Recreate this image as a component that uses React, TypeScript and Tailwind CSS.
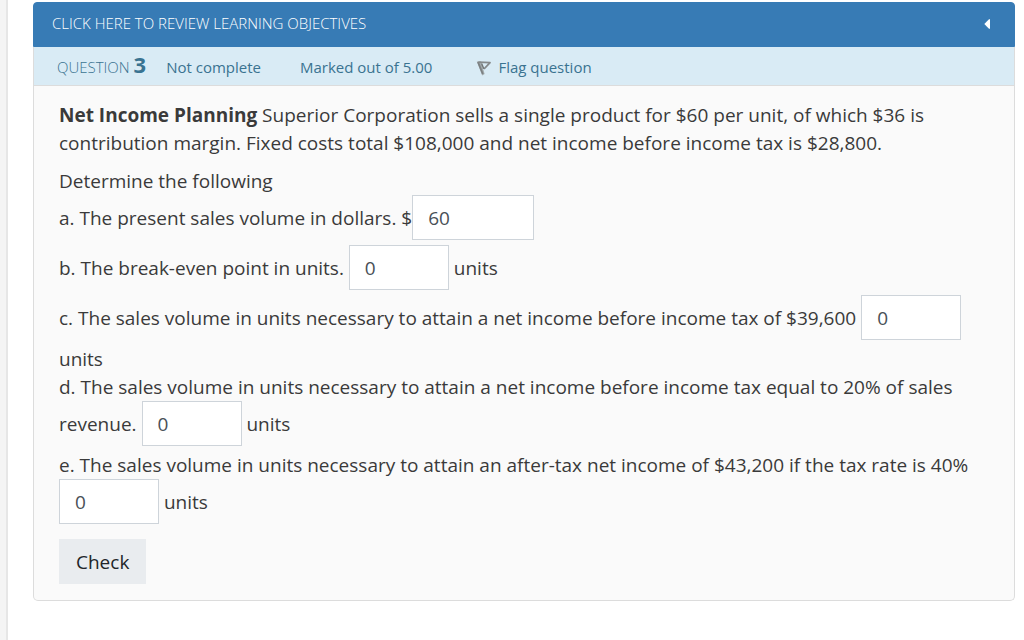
import { useState } from "react";

type AnswerProps = { label: string; initial: string; wide?: boolean };

function Answer({ label, initial, wide }: AnswerProps) {
  const [value, setValue] = useState(initial);
  return (
    <input
      type="text"
      aria-label={label}
      value={value}
      onChange={(e) => setValue(e.target.value)}
      className={`mb-[5px] h-[45px] border border-[#ced4da] bg-white px-[15px] text-[#495057] outline-none focus:border-[#80bdff] ${
        wide ? "w-[122px]" : "w-[100px]"
      }`}
    />
  );
}

function FlagIcon() {
  return (
    <svg viewBox="0 0 16 18" className="h-[18px] w-4 self-center" fill="none" aria-hidden="true">
      <path d="M.8 3.4 L5 3.4 L8.6 16 L6.2 17.4 Z" fill="#a3abae" />
      <path d="M2 4 L6.8 16" stroke="#7d8183" strokeWidth="1.8" />
      <path d="M2.4 4.2 L14 4.6 L8 11" stroke="#85898b" strokeWidth="1.8" strokeLinejoin="round" />
      <path d="M5.6 5.4 L7.8 10.8" stroke="#6f7374" strokeWidth="1.4" />
    </svg>
  );
}

export default function App() {
  return (
    <div className="flex min-h-screen bg-white font-['Open_Sans',sans-serif]">
      <aside className="w-2 shrink-0 border-r-2 border-[#e6e6e6] bg-[#f4f4f4]" />
      <main className="min-w-0 flex-1 pt-[2px] pr-[9px] pb-10 pl-[25px]">
        <button
          type="button"
          className="flex h-[45px] w-full items-center justify-between rounded-t border border-[#377bb5] bg-[#377bb5] pr-6 pl-[18px] text-[15px] font-light text-white"
        >
          <span className="pb-[2px]">CLICK HERE TO REVIEW LEARNING OBJECTIVES</span>
          <svg viewBox="0 0 6 10" className="mb-[2px] h-[10px] w-[6px]" fill="currentColor" aria-hidden="true">
            <path d="M6 .3 V9.7 H5 L.3 5 L5 .3 Z" />
          </svg>
        </button>
        <section className="rounded-b-[5px] border border-t-0 border-[#dcdcdc] bg-[#fafafa]">
          <header className="flex h-[39px] items-baseline border-b border-[#dcdcdc] bg-[#d9ebf5] pt-[6px] pl-[23px] text-[15px] leading-[22px] text-[#3a7391]">
            <h2 className="font-light">
              QUESTION <span className="text-[22px] font-bold">3</span>
            </h2>
            <span className="ml-5">Not complete</span>
            <span className="ml-[39px]">Marked out of 5.00</span>
            <a href="#flag" className="ml-11 flex items-baseline gap-[6px]">
              <FlagIcon />
              Flag question
            </a>
          </header>
          <form
            className="px-[25px] pt-[15px] pb-4 text-[19px] leading-7 text-[#3a3a3a]"
            onSubmit={(e) => e.preventDefault()}
          >
            <p className="mb-[10px]">
              <strong className="font-bold">Net Income Planning</strong> Superior Corporation sells a single product for
              $60 per unit, of which $36 is contribution margin. Fixed costs total $108,000 and net income before income
              tax is $28,800.
            </p>
            <p>Determine the following</p>
            <p>
              a. The present sales volume in dollars. $<Answer label="Present sales volume in dollars" initial="60" wide />
            </p>
            <p>
              b. The break-even point in units. <Answer label="Break-even point in units" initial="0" /> units
            </p>
            <p>
              c. The sales volume in units necessary to attain a net income before income tax of $39,600{" "}
              <Answer label="Units for income before tax of $39,600" initial="0" /> units
            </p>
            <p>
              d. The sales volume in units necessary to attain a net income before income tax equal to 20% of sales
              revenue. <Answer label="Units for income equal to 20% of sales revenue" initial="0" /> units
            </p>
            <p>
              e. The sales volume in units necessary to attain an after-tax net income of $43,200 if the tax rate is 40%{" "}
              <Answer label="Units for after-tax income of $43,200" initial="0" /> units
            </p>
            <button type="submit" className="mt-[10px] block h-[45px] bg-[#e9ecef] px-[17px] text-[#212529]">
              Check
            </button>
          </form>
        </section>
      </main>
    </div>
  );
}
